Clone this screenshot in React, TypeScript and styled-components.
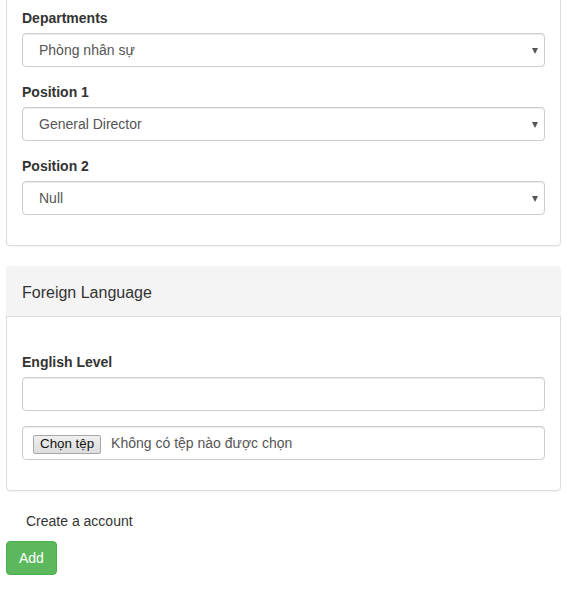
import React from 'react';
import styled, { createGlobalStyle } from 'styled-components';

const GlobalStyle = createGlobalStyle`
  body {
    margin: 0;
    background: #ffffff;
    font-family: "Liberation Sans", Arial, sans-serif;
    font-size: 14px;
    line-height: 1.42857;
    color: #333333;
  }
  * { box-sizing: border-box; }
`;

const Page = styled.div`
  padding: 0 6px 20px 6px;
  margin-top: -8px;
`;

const Panel = styled.div`
  background: #ffffff;
  border: 1px solid #dddddd;
  border-radius: 4px;
  margin-bottom: 20px;
  box-shadow: 0 1px 1px rgba(0, 0, 0, 0.05);
`;

const PanelHeading = styled.div`
  background: #f4f4f4;
  border-bottom: 1px solid #dddddd;
  border-radius: 4px 4px 0 0;
  margin: -1px -1px 0;
  padding: 17px 16px 13px;
`;

const PanelTitle = styled.h3`
  margin: 0;
  font-size: 16px;
  font-weight: normal;
  line-height: 20px;
  color: #333333;
`;

const PanelBody = styled.div<{ $top?: number }>`
  padding: ${(p) => p.$top ?? 15}px 15px 15px;
`;

const FormGroup = styled.div`
  margin-bottom: 15px;
`;

const Label = styled.label`
  display: block;
  font-weight: bold;
  margin-bottom: 5px;
  line-height: 20px;
`;

const Control = `
  display: block;
  width: 100%;
  height: 34px;
  padding: 6px 12px;
  font-family: "Liberation Sans", Arial, sans-serif;
  font-size: 14px;
  line-height: 1.42857;
  color: #555555;
  background: #ffffff;
  border: 1px solid #cccccc;
  border-radius: 4px;
  box-shadow: inset 0 1px 1px rgba(0, 0, 0, 0.075);
`;

const SelectWrap = styled.div`
  position: relative;
`;

const Select = styled.select`
  ${Control}
  appearance: none;
  padding: 7px 16px 5px;
`;

const Arrow = styled.span`
  position: absolute;
  right: 7px;
  top: 50%;
  margin-top: -2px;
  width: 0;
  height: 0;
  border-left: 3.5px solid transparent;
  border-right: 3.5px solid transparent;
  border-top: 6px solid #555555;
  pointer-events: none;
`;

const Input = styled.input`
  ${Control}
`;

const FileBox = styled.div`
  ${Control}
  display: flex;
  align-items: center;
  gap: 10px;
  padding: 2px 10px 0;
`;

const FileButton = styled.span`
  display: inline-flex;
  align-items: center;
  height: 19px;
  padding: 0 6px;
  background: linear-gradient(#f0f0f0, #dddddd);
  border: 1px solid #a6a6a6;
  border-radius: 2px;
  color: #111111;
  font-size: 13.33px;
`;

const FileText = styled.span`
  color: #555555;
`;

const Caption = styled.div`
  padding-left: 20px;
  line-height: 20px;
  margin-bottom: 10px;
`;

const AddButton = styled.button`
  font-family: "Liberation Sans", Arial, sans-serif;
  font-size: 14px;
  line-height: 20px;
  padding: 6px 12px;
  color: #ffffff;
  background: #5cb85c;
  border: 1px solid #4cae4c;
  border-radius: 4px;
`;

function Field({ label, value }: { label: string; value: string }) {
  return (
    <FormGroup>
      <Label>{label}</Label>
      <SelectWrap>
        <Select defaultValue={value}>
          <option>{value}</option>
        </Select>
        <Arrow />
      </SelectWrap>
    </FormGroup>
  );
}

function App() {
  return (
    <>
      <GlobalStyle />
      <Page>
        <Panel>
          <PanelBody>
            <Field label="Departments" value="Phòng nhân sự" />
            <Field label="Position 1" value="General Director" />
            <Field label="Position 2" value="Null" />
          </PanelBody>
        </Panel>
        <Panel>
          <PanelHeading>
            <PanelTitle>Foreign Language</PanelTitle>
          </PanelHeading>
          <PanelBody $top={35}>
            <FormGroup>
              <Label>English Level</Label>
              <Input type="text" />
            </FormGroup>
            <FormGroup>
              <FileBox>
                <FileButton>Chọn tệp</FileButton>
                <FileText>Không có tệp nào được chọn</FileText>
              </FileBox>
            </FormGroup>
          </PanelBody>
        </Panel>
        <Caption>Create a account</Caption>
        <AddButton>Add</AddButton>
      </Page>
    </>
  );
}

export default App;
